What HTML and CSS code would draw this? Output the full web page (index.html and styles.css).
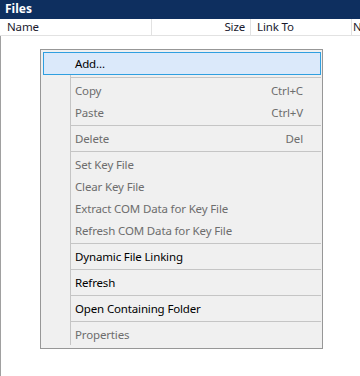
FILE: index.html
```html
<!DOCTYPE html>
<html lang="en">
<head>
    <meta charset="UTF-8">
    <meta name="viewport" content="width=device-width, initial-scale=1.0">
    <title>Files</title>
    <link rel="stylesheet" href="styles.css">
</head>
<body>
    <div class="panel">
        <div class="title">Files</div>

        <div class="columns">
            <div class="col col-name">Name</div>
            <div class="col col-size">Size</div>
            <div class="col col-link">Link To</div>
            <div class="col col-more">N</div>
        </div>

        <div class="list">
            <div class="menu">
                <div class="item hover">Add...</div>
                <div class="sep"></div>
                <div class="item off">Copy<span class="key">Ctrl+C</span></div>
                <div class="item off">Paste<span class="key">Ctrl+V</span></div>
                <div class="sep"></div>
                <div class="item off">Delete<span class="key">Del</span></div>
                <div class="sep"></div>
                <div class="item off">Set Key File</div>
                <div class="item off">Clear Key File</div>
                <div class="item off">Extract COM Data for Key File</div>
                <div class="item off">Refresh COM Data for Key File</div>
                <div class="sep"></div>
                <div class="item">Dynamic File Linking</div>
                <div class="sep"></div>
                <div class="item">Refresh</div>
                <div class="sep"></div>
                <div class="item">Open Containing Folder</div>
                <div class="sep"></div>
                <div class="item off">Properties</div>
            </div>
        </div>
    </div>
</body>
</html>
```

FILE: styles.css
```css
body {
    margin: 0;
    padding: 0;
    font-family: "Noto Sans", "Open Sans", sans-serif;
    font-size: 11.5px;
    letter-spacing: -0.15px;
    background: #fff;
}
.panel {
    display: flex;
    flex-direction: column;
    height: 376px;
    overflow: hidden;
}
.title {
    height: 19px;
    line-height: 18px;
    padding-left: 5px;
    background-color: #0e2f5f;
    color: #fff;
    font-size: 12px;
    font-weight: bold;
    letter-spacing: 0;
}
.columns {
    display: flex;
    height: 16px;
    line-height: 16px;
    border-bottom: 1px solid #e2e2e2;
    color: #1a1a2e;
}
.col {
    border-right: 1px solid #e2e2e2;
    white-space: nowrap;
    overflow: hidden;
}
.col-name {
    width: 144px;
    padding-left: 7px;
}
.col-size {
    width: 93px;
    padding-right: 5px;
    text-align: right;
}
.col-link {
    width: 94px;
    padding-left: 6px;
}
.col-more {
    flex: 1;
    padding-left: 1px;
    border-right: 0;
}
.list {
    flex: 1;
    position: relative;
    border-left: 1px solid #a0a0a0;
}
.menu {
    position: absolute;
    left: 39px;
    top: 13px;
    width: 278px;
    padding: 2px 1px 3px 2px;
    background: #f0f0f0;
    border: 1px solid #979797;
}
.menu::before {
    content: "";
    position: absolute;
    left: 29px;
    top: 2px;
    bottom: 3px;
    width: 1px;
    background: #c5c5c5;
}
.item {
    position: relative;
    display: flex;
    align-items: center;
    height: 22px;
    padding: 0 18px 0 32px;
    color: #000;
    white-space: nowrap;
}
.item.off {
    color: #6d6d6d;
}
.item.hover {
    height: 21px;
    padding-left: 31px;
    background: #dbe9fa;
    border: 1px solid #2f9fe0;
}
.key {
    margin-left: auto;
}
.sep {
    position: relative;
    height: 1px;
    margin: 2px 0 1px 27px;
    background: #c5c5c5;
}
```
